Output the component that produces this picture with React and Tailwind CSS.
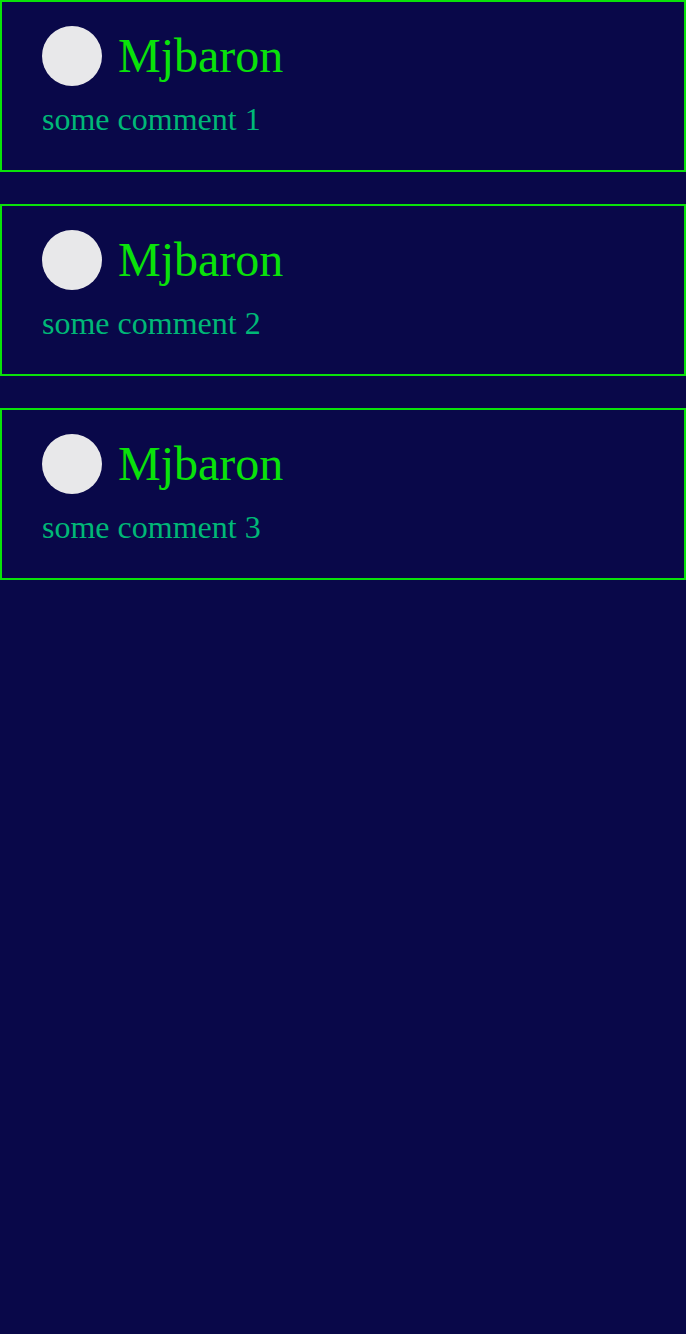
const comments = [
  { id: 1, author: "Mjbaron", text: "some comment 1" },
  { id: 2, author: "Mjbaron", text: "some comment 2" },
  { id: 3, author: "Mjbaron", text: "some comment 3" },
];

function Comment({ author, text }) {
  return (
    <article className="h-[172px] border-2 border-[#0ae20a] px-10 pt-6">
      <header className="flex items-center gap-4">
        <span className="size-[60px] shrink-0 rounded-full bg-[#e8e8ea]" />
        <h2 className="text-[48px] leading-[60px] text-[#0ae20a]">{author}</h2>
      </header>
      <p className="mt-[15px] text-[32px] leading-9 text-[#00b877]">{text}</p>
    </article>
  );
}

export default function App() {
  return (
    <main className="flex h-[1334px] flex-col gap-8 bg-[#090849] font-['Liberation_Serif',serif]">
      {comments.map((c) => (
        <Comment key={c.id} author={c.author} text={c.text} />
      ))}
    </main>
  );
}
